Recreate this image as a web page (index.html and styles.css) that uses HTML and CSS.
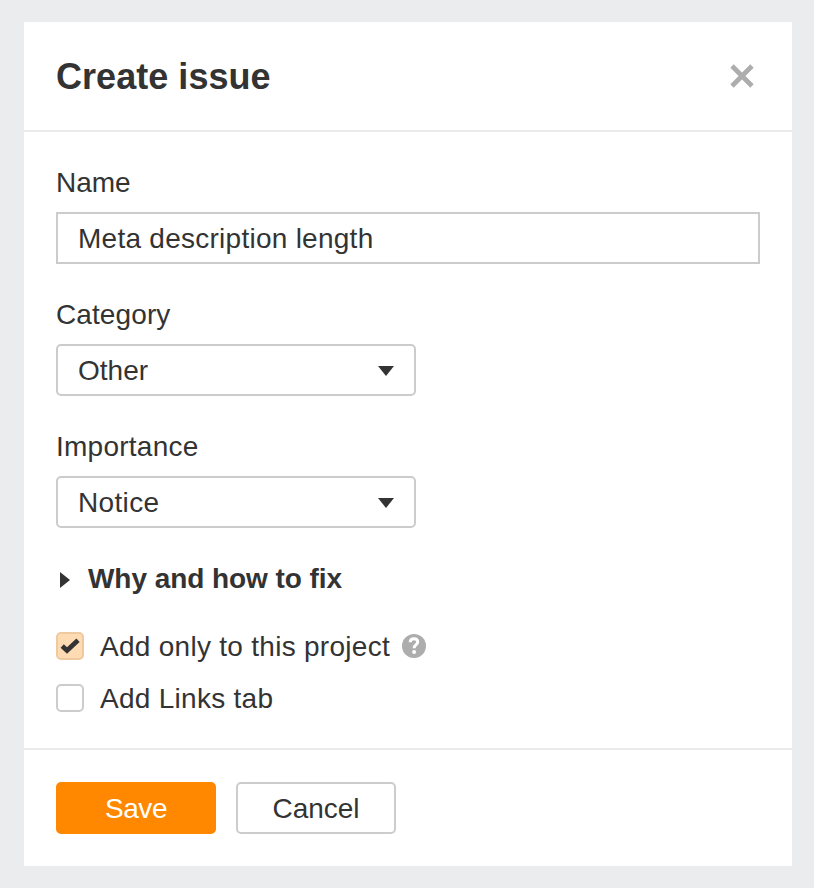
FILE: index.html
```html
<!DOCTYPE html>
<html lang="en">
<head>
<meta charset="utf-8">
<title>Create issue</title>
<link rel="stylesheet" href="styles.css">
</head>
<body>
<form class="dialog">
  <header class="header">
    <h1 class="title">Create issue</h1>
    <svg class="close" viewBox="0 0 24 24" width="24" height="24"><path d="M2 2 22 22M22 2 2 22" fill="none" stroke="#adadad" stroke-width="4.700" stroke-linecap="butt"/></svg>
  </header>
  <main class="content">
    <div class="field">
      <div class="label label-name">Name</div>
      <div class="control input">Meta description length</div>
    </div>
    <div class="field">
      <div class="label label-category">Category</div>
      <div class="control select select-category">Other<svg width="16" height="10" viewBox="0 0 16 10"><path d="M0 0h16L8 10z" fill="#333"/></svg></div>
    </div>
    <div class="field">
      <div class="label">Importance</div>
      <div class="control select">Notice<svg width="16" height="10" viewBox="0 0 16 10"><path d="M0 0h16L8 10z" fill="#333"/></svg></div>
    </div>
    <div class="disclosure"><svg width="10" height="16" viewBox="0 0 10 16"><path d="M0 0v16l10-8z" fill="#333"/></svg><span>Why and how to fix</span></div>
    <div class="option"><span class="box checked"><svg width="20" height="16" viewBox="0 0 20 16"><path d="M2.200 8 7 12.400 18 2.300" fill="none" stroke="#333" stroke-width="4.800"/></svg></span><span class="option-text">Add only to this project</span><span class="help"><svg width="24" height="24" viewBox="0 0 24 24"><path d="M8.200 8.200C8.300 5.900 9.900 4.700 12 4.700S15.700 5.900 15.700 8C15.700 10.700 12.100 10.700 12.100 14.200" fill="none" stroke="#fff" stroke-width="3"/><circle cx="12.100" cy="18" r="2" fill="#fff"/></svg></span></div>
    <div class="option"><span class="box"></span><span class="option-text">Add Links tab</span></div>
  </main>
  <footer class="footer">
    <button type="button" class="button primary">Save</button>
    <button type="button" class="button">Cancel</button>
  </footer>
</form>
</body>
</html>
```

FILE: styles.css
```css
* { box-sizing: border-box; }
body { margin: 0; padding: 22px 22px 22px 24px; background: #ebeced; color: #333; font: 28px/32px "Liberation Sans", Arial, sans-serif; }
.dialog { width: 768px; height: 844px; background: #fff; }
.header { height: 110px; padding: 0 38px 0 32px; border-bottom: 2px solid #ebebeb; display: flex; align-items: center; justify-content: space-between; }
.title { margin: 0; padding-top: 2px; font-size: 36px; line-height: 40px; letter-spacing: .04px; }
svg { display: block; flex: none; }
.close { overflow: visible; }
.content { height: 616px; padding: 34px 32px 0; }
.field { height: 132px; }
.label { height: 46px; line-height: 34px; letter-spacing: .25px; }
.label-name { letter-spacing: 0; }
.label-category { letter-spacing: .1px; }
.control { height: 52px; border: 2px solid #ccc; padding: 2px 20px 0; display: flex; align-items: center; letter-spacing: .26px; }
.select { width: 360px; border-radius: 5px; justify-content: space-between; letter-spacing: .35px; }
.select-category { letter-spacing: 0; }
.disclosure { height: 34px; padding-left: 4px; display: flex; align-items: center; gap: 18px; font-weight: bold; margin-bottom: 34px; letter-spacing: -.06px; }
.disclosure svg { margin-top: 2px; }
.option { height: 32px; margin-bottom: 20px; display: flex; align-items: center; }
.option-text { padding-top: 2px; letter-spacing: .28px; }
.box { width: 28px; height: 28px; border: 2px solid #ccc; border-radius: 5px; margin-right: 16px; display: grid; place-items: center; }
.checked { background: #ffdbb3; border-color: #efc99f; }
.help { width: 24px; height: 24px; margin-left: 12px; border-radius: 50%; background: #adadad; }
.footer { height: 118px; border-top: 2px solid #ebebeb; padding: 32px; display: flex; gap: 20px; }
.button { width: 160px; height: 52px; padding: 2px 0 0; border: 2px solid #ccc; border-radius: 5px; background: #fff; color: #333; font: inherit; }
.primary { background: #ff8800; border-color: #ff8800; color: #fff; letter-spacing: -.4px; }
```
